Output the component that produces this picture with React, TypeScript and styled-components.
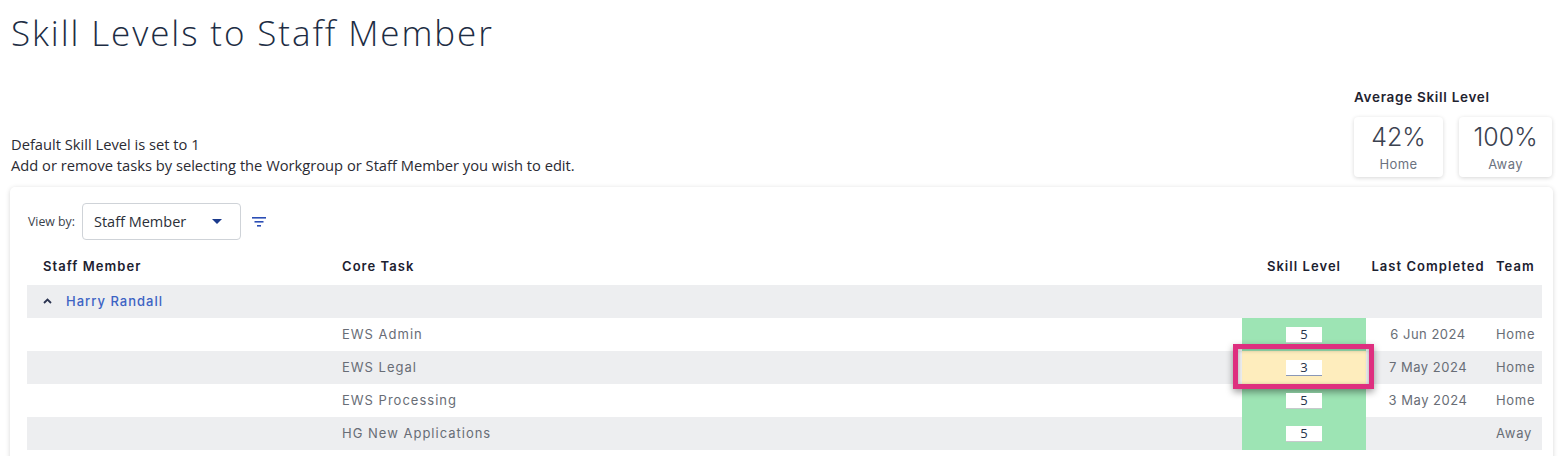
import React from "react";
import styled, { createGlobalStyle } from "styled-components";

const GlobalStyle = createGlobalStyle`
  html, body {
    margin: 0;
    padding: 0;
    background: #ffffff;
    overflow: hidden;
  }
  body {
    font-family: "Open Sans", "Liberation Sans", sans-serif;
  }
`;

const Page = styled.div`
  padding: 10px 10px 0 10px;
  width: 1543px;
`;

const Title = styled.h1`
  margin: 0 0 0 1px;
  font-family: "Open Sans", sans-serif;
  font-weight: 300;
  font-size: 35px;
  line-height: 45px;
  letter-spacing: 1.9px;
  color: #1d2d44;
`;

const InfoRow = styled.div`
  display: flex;
  justify-content: space-between;
  align-items: flex-end;
  margin-top: 33px;
`;

const Intro = styled.div`
  padding-left: 1px;
  font-size: 14.7px;
  line-height: 21px;
  color: #2b2b33;
  padding-bottom: 1px;
`;

const AverageBlock = styled.div`
  display: flex;
  flex-direction: column;
  padding-right: 1px;
`;

const AverageLabel = styled.div`
  font-family: "Inter", sans-serif;
  font-weight: 600;
  font-size: 13.5px;
  line-height: 18px;
  letter-spacing: 0.7px;
  color: #1f2330;
  margin-bottom: 11px;
`;

const StatRow = styled.div`
  display: flex;
  gap: 16px;
`;

const StatBox = styled.div<{ $w: number }>`
  width: ${(p) => p.$w}px;
  height: 60px;
  box-sizing: border-box;
  border-radius: 4px;
  box-shadow: 0 1px 4px rgba(0, 0, 0, 0.16);
  display: flex;
  flex-direction: column;
  align-items: center;
  font-family: "Inter", sans-serif;
`;

const StatValue = styled.div`
  font-weight: 300;
  font-size: 25px;
  line-height: 30px;
  margin-top: 5px;
  color: #3b4250;
`;

const StatName = styled.div`
  font-size: 13px;
  line-height: 18px;
  margin-top: 3px;
  letter-spacing: 0.4px;
  color: #6b7280;
`;

const Card = styled.div`
  margin-top: 10px;
  background: #ffffff;
  border-radius: 5px;
  box-shadow: 0 1px 5px rgba(0, 0, 0, 0.16);
  padding: 16px 11px 20px 17px;
  height: 400px;
  box-sizing: border-box;
`;

const Toolbar = styled.div`
  display: flex;
  align-items: center;
  height: 37px;
`;

const ViewLabel = styled.span`
  font-size: 12.3px;
  color: #3a3f4b;
  margin-right: 7px;
  margin-left: 1px;
`;

const Select = styled.div`
  width: 159px;
  height: 37px;
  box-sizing: border-box;
  border: 1px solid #cfd3d8;
  border-radius: 4px;
  display: flex;
  align-items: center;
  justify-content: space-between;
  padding: 0 18px 0 11px;
  font-size: 14.5px;
  color: #2b2f38;
`;

const Caret = styled.span`
  width: 0;
  height: 0;
  border-left: 5px solid transparent;
  border-right: 5px solid transparent;
  border-top: 5px solid #1b3a8c;
`;

const FilterButton = styled.span`
  margin-left: 10px;
  display: flex;
  align-items: center;
`;

const Grid = styled.div`
  display: grid;
  grid-template-columns: 315px 1fr 124px 124px 52px;
`;

const HeadCell = styled.div<{ $align?: string; $pad?: number }>`
  height: 45px;
  box-sizing: border-box;
  padding: 0 0 10px ${(p) => p.$pad ?? 0}px;
  display: flex;
  align-items: flex-end;
  justify-content: ${(p) => p.$align ?? "flex-start"};
  font-family: "Inter", sans-serif;
  font-weight: 600;
  font-size: 13px;
  line-height: 18px;
  color: #1c2130;
  letter-spacing: 1.05px;
  white-space: nowrap;
`;

const GroupRow = styled.div`
  grid-column: 1 / -1;
  height: 33px;
  padding-bottom: 1px;
  box-sizing: border-box;
  background: #edeef0;
  display: flex;
  align-items: center;
  padding-left: 16px;
  font-family: "Inter", sans-serif;
  font-size: 13px;
  font-weight: 500;
  color: #3c63c4;
  letter-spacing: 1px;
`;

const Chevron = styled.span`
  display: flex;
  margin-right: 14px;
`;

const Cell = styled.div<{ $alt: boolean; $align?: string; $pad?: number; $spacing?: number }>`
  height: 33px;
  box-sizing: border-box;
  padding-bottom: 2px;
  background: ${(p) => (p.$alt ? "#edeef0" : "#ffffff")};
  display: flex;
  align-items: center;
  justify-content: ${(p) => p.$align ?? "flex-start"};
  padding-left: ${(p) => p.$pad ?? 0}px;
  font-family: "Inter", sans-serif;
  font-size: 13px;
  color: #686d76;
  letter-spacing: ${(p) => p.$spacing ?? 1}px;
  white-space: nowrap;
`;

const SkillCell = styled.div<{ $state: "good" | "mid" }>`
  position: relative;
  height: 33px;
  background: ${(p) => (p.$state === "good" ? "#9de4b4" : "#feedbd")};
  display: flex;
  align-items: center;
  justify-content: center;
`;

const SkillInput = styled.div<{ $focus?: boolean }>`
  width: 36px;
  height: 16px;
  box-sizing: border-box;
  background: #ffffff;
  border-bottom: 1px solid ${(p) => (p.$focus ? "#8a98b8" : "#c7c9cc")};
  display: flex;
  align-items: center;
  justify-content: center;
  font-size: 13px;
  line-height: 15px;
  color: #27324a;
  position: relative;
  z-index: 2;
`;

const Highlight = styled.div`
  position: absolute;
  top: -7px;
  left: -9px;
  right: -8px;
  bottom: -5px;
  border: 5px solid #de2f7f;
  box-shadow: 0 3px 7px rgba(0, 0, 0, 0.4), inset 0 1px 4px rgba(0, 0, 0, 0.3);
  pointer-events: none;
  z-index: 1;
`;

type Row = {
  task: string;
  skill: number;
  last: string;
  team: string;
  highlighted?: boolean;
};

const rows: Row[] = [
  { task: "EWS Admin", skill: 5, last: "6 Jun 2024", team: "Home" },
  { task: "EWS Legal", skill: 3, last: "7 May 2024", team: "Home", highlighted: true },
  { task: "EWS Processing", skill: 5, last: "3 May 2024", team: "Home" },
  { task: "HG New Applications", skill: 5, last: "", team: "Away" },
];

function App() {
  return (
    <Page>
      <GlobalStyle />
      <Title>Skill Levels to Staff Member</Title>
      <InfoRow>
        <Intro>
          <div>Default Skill Level is set to 1</div>
          <div>Add or remove tasks by selecting the Workgroup or Staff Member you wish to edit.</div>
        </Intro>
        <AverageBlock>
          <AverageLabel>Average Skill Level</AverageLabel>
          <StatRow>
            <StatBox $w={89}>
              <StatValue>42%</StatValue>
              <StatName>Home</StatName>
            </StatBox>
            <StatBox $w={93}>
              <StatValue>100%</StatValue>
              <StatName>Away</StatName>
            </StatBox>
          </StatRow>
        </AverageBlock>
      </InfoRow>
      <Card>
        <Toolbar>
          <ViewLabel>View by:</ViewLabel>
          <Select>
            <span>Staff Member</span>
            <Caret />
          </Select>
          <FilterButton>
            <svg width="16" height="12" viewBox="0 0 16 12">
              <rect x="1" y="1" width="14" height="1.6" fill="#2b4eb5" />
              <rect x="3.5" y="5" width="9" height="1.6" fill="#2b4eb5" />
              <rect x="6" y="9" width="4" height="1.6" fill="#2b4eb5" />
            </svg>
          </FilterButton>
        </Toolbar>
        <Grid>
          <HeadCell $pad={16}>Staff Member</HeadCell>
          <HeadCell>Core Task</HeadCell>
          <HeadCell $align="center">Skill Level</HeadCell>
          <HeadCell $align="center">Last Completed</HeadCell>
          <HeadCell $pad={6}>Team</HeadCell>
          <GroupRow>
            <Chevron>
              <svg width="9" height="6" viewBox="0 0 9 6">
                <path d="M1 5 L4.5 1.5 L8 5" fill="none" stroke="#2a3350" strokeWidth="1.8" />
              </svg>
            </Chevron>
            Harry Randall
          </GroupRow>
          {rows.map((r, idx) => {
            const alt = idx % 2 === 1;
            return (
              <React.Fragment key={idx}>
                <Cell $alt={alt} />
                <Cell $alt={alt}>{r.task}</Cell>
                <SkillCell $state={r.skill >= 5 ? "good" : "mid"}>
                  {r.highlighted && <Highlight />}
                  <SkillInput $focus={r.highlighted}>{r.skill}</SkillInput>
                </SkillCell>
                <Cell $alt={alt} $align="center" $spacing={0.5}>{r.last}</Cell>
                <Cell $alt={alt} $pad={6} $spacing={0.7}>{r.team}</Cell>
              </React.Fragment>
            );
          })}
        </Grid>
      </Card>
    </Page>
  );
}

export default App;
